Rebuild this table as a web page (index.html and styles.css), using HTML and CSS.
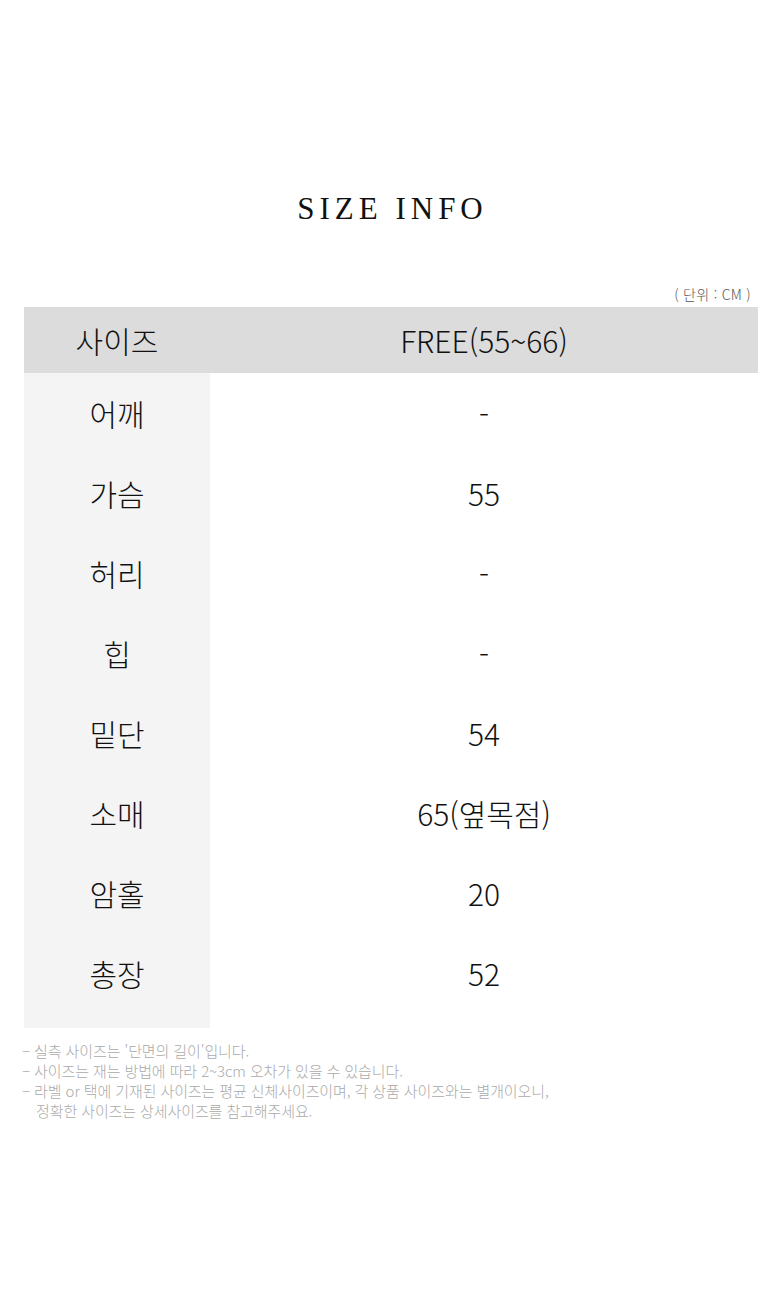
FILE: index.html
```html
<!DOCTYPE html>
<html lang="ko">
<head>
<meta charset="utf-8">
<link rel="stylesheet" href="styles.css">
</head>
<body>
<div class="page">
  <h1 class="title">SIZE INFO</h1>
  <div class="unit">( 단위 : CM )</div>
  <div class="table">
    <div class="head-row">
      <div class="label">사이즈</div>
      <div class="value">FREE(55~66)</div>
    </div>
    <div class="body">
      <div class="col-labels">
        <div class="cell">어깨</div>
        <div class="cell">가슴</div>
        <div class="cell">허리</div>
        <div class="cell">힙</div>
        <div class="cell">밑단</div>
        <div class="cell">소매</div>
        <div class="cell">암홀</div>
        <div class="cell">총장</div>
      </div>
      <div class="col-values">
        <div class="cell">-</div>
        <div class="cell">55</div>
        <div class="cell">-</div>
        <div class="cell">-</div>
        <div class="cell">54</div>
        <div class="cell">65(옆목점)</div>
        <div class="cell">20</div>
        <div class="cell">52</div>
      </div>
    </div>
  </div>
  <ul class="notes">
    <li>– 실측 사이즈는 '단면의 길이'입니다.</li>
    <li>– 사이즈는 재는 방법에 따라 2~3cm 오차가 있을 수 있습니다.</li>
    <li>– 라벨 or 택에 기재된 사이즈는 평균 신체사이즈이며, 각 상품 사이즈와는 별개이오니,<br><span class="indent">정확한 사이즈는 상세사이즈를 참고해주세요.</span></li>
  </ul>
</div>
</body>
</html>
```
FILE: styles.css
```css
html, body {
  margin: 0;
  padding: 0;
  background: #ffffff;
}
.page {
  width: 780px;
  font-family: "Noto Sans CJK KR", "Noto Sans", sans-serif;
  color: #1a1a1a;
}
.title {
  margin: 0;
  padding-top: 187px;
  height: 44px;
  line-height: 44px;
  text-align: center;
  font-family: "Liberation Serif", "DejaVu Serif", serif;
  font-weight: 400;
  font-size: 31px;
  letter-spacing: 5px;
  padding-left: 5px;
  color: #111;
}
.unit {
  margin-top: 50px;
  height: 26px;
  line-height: 26px;
  text-align: right;
  padding-right: 29px;
  font-size: 14px;
  color: #555;
  font-weight: 300;
  letter-spacing: 0.3px;
}
.table {
  margin: 0 22px 0 24px;
}
.head-row {
  display: grid;
  grid-template-columns: 186px 1fr;
  height: 66px;
  background: #dcdcdc;
  align-items: center;
  font-size: 30px;
  font-weight: 300;
  color: #111;
}
.head-row .label,
.head-row .value {
  text-align: center;
}
.body {
  display: grid;
  grid-template-columns: 186px 1fr;
}
.col-labels {
  background: #f4f4f4;
  padding-bottom: 15px;
}
.cell {
  height: 80px;
  display: flex;
  align-items: center;
  justify-content: center;
  font-size: 30px;
  font-weight: 300;
  color: #111;
}
.notes {
  list-style: none;
  margin: 13px 0 0 22px;
  padding: 0;
  font-size: 15px;
  line-height: 20px;
  color: #aaaaaa;
  font-weight: 300;
  letter-spacing: -0.1px;
}
.indent {
  padding-left: 14px;
}
```
